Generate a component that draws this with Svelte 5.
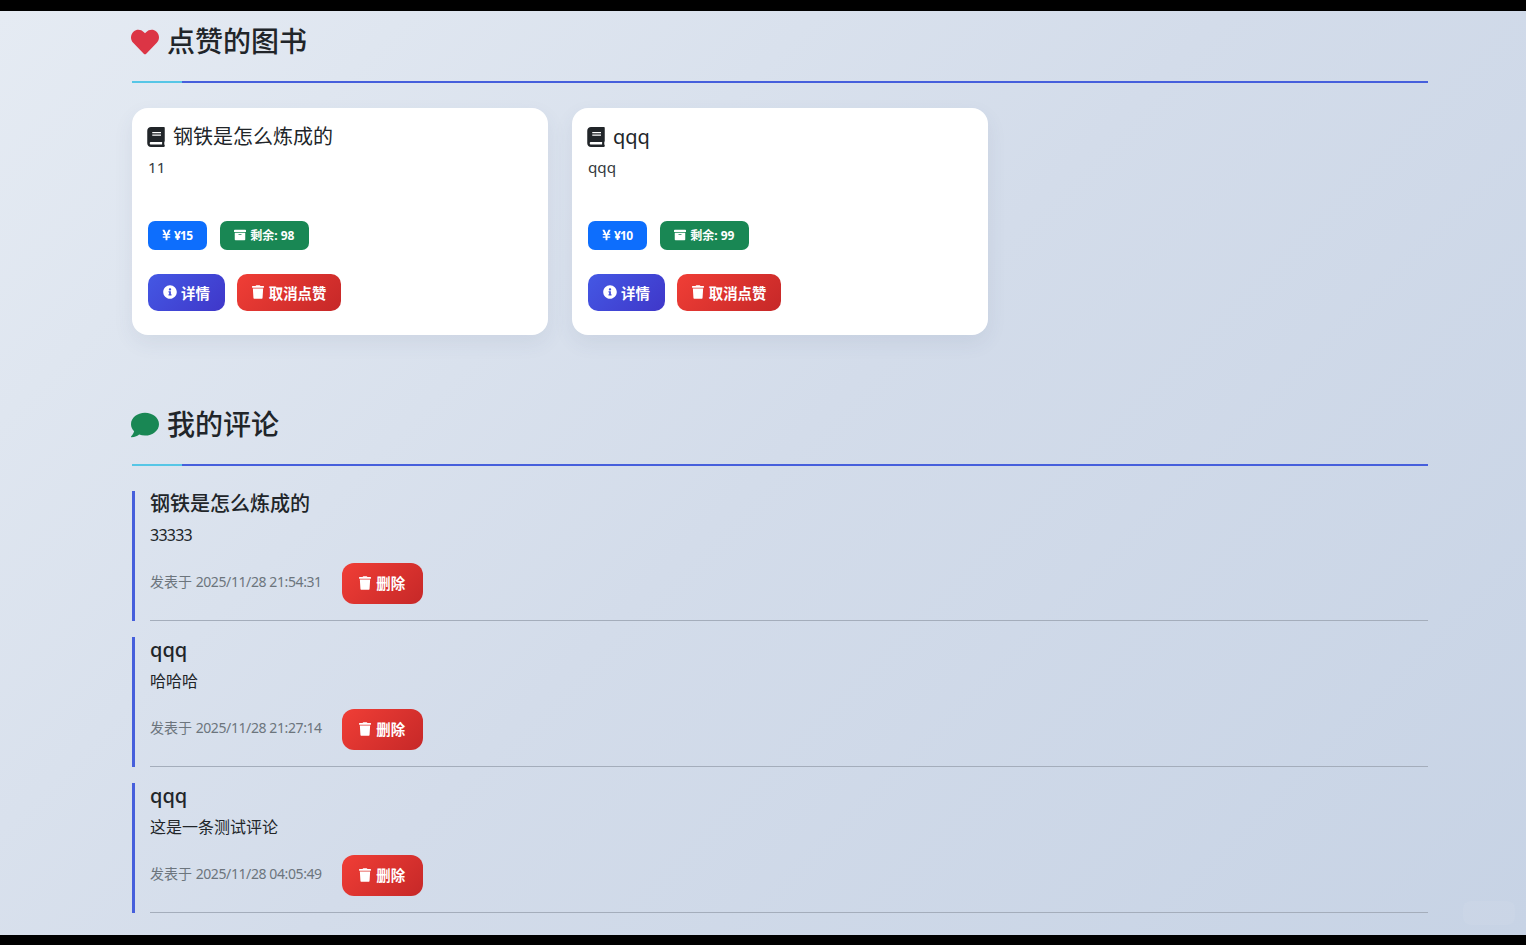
<script>
  const icons = {
    heart: { box: "0 0 512 512", d: "M462.3 62.6C407.5 15.9 326 24.3 275.7 76.2L256 96.5l-19.7-20.3C186.1 24.3 104.5 15.9 49.7 62.6c-62.8 53.6-66.1 149.8-9.9 207.9l193.5 199.8c12.5 12.9 32.8 12.9 45.3 0l193.5-199.8c56.3-58.1 53-154.3-9.8-207.9z" },
    comment: { box: "0 0 512 512", d: "M256 32C114.6 32 0 125.1 0 240c0 49.6 21.4 95 57 130.7C44.5 421.1 2.7 466 2.2 466.5c-2.2 2.3-2.8 5.7-1.5 8.7S4.8 480 8 480c66.3 0 116-31.8 140.6-51.4 32.7 12.3 69 19.4 107.4 19.4 141.4 0 256-93.1 256-208S397.4 32 256 32z" },
    book: { box: "0 0 448 512", d: "M448 360V24c0-13.3-10.7-24-24-24H96C43 0 0 43 0 96v320c0 53 43 96 96 96h328c13.3 0 24-10.7 24-24v-16c0-7.5-3.5-14.3-8.9-18.7-4.2-15.4-4.2-59.3 0-74.7 5.4-4.3 8.9-11.1 8.9-18.6zM128 134c0-3.3 2.7-6 6-6h212c3.3 0 6 2.7 6 6v20c0 3.3-2.7 6-6 6H134c-3.3 0-6-2.7-6-6v-20zm0 64c0-3.3 2.7-6 6-6h212c3.3 0 6 2.7 6 6v20c0 3.3-2.7 6-6 6H134c-3.3 0-6-2.7-6-6v-20zm253.4 250H96c-17.7 0-32-14.3-32-32 0-17.6 14.4-32 32-32h285.4c-1.9 17.1-1.9 46.9 0 64z" },
    yen: { box: "0 0 384 512", d: "M351.2 32h-65.3c-4.6 0-8.8 2.6-10.8 6.7l-55.4 113.2c-14.5 34.7-27.1 71.9-27.1 71.9h-1.3s-12.6-37.2-27.1-71.9L108.8 38.7c-2-4.1-6.2-6.7-10.8-6.7H32.8c-9.1 0-14.9 9.7-10.6 17.7L102.6 200H44c-6.6 0-12 5.4-12 12v32c0 6.6 5.4 12 12 12h88.2l19.8 37.2V320H44c-6.6 0-12 5.4-12 12v32c0 6.6 5.4 12 12 12h108v92c0 6.6 5.4 12 12 12h56c6.6 0 12-5.4 12-12v-92h108c6.6 0 12-5.4 12-12v-32c0-6.6-5.4-12-12-12H232v-26.8l19.8-37.2H340c6.6 0 12-5.4 12-12v-32c0-6.6-5.4-12-12-12h-58.6l80.4-150.3c4.3-8-1.5-17.7-10.6-17.7z" },
    archive: { box: "0 0 512 512", d: "M32 448c0 17.7 14.3 32 32 32h384c17.7 0 32-14.3 32-32V160H32v288zm160-212c0-6.6 5.4-12 12-12h104c6.6 0 12 5.4 12 12v8c0 6.6-5.4 12-12 12H204c-6.6 0-12-5.4-12-12v-8zM480 32H32C14.3 32 0 46.3 0 64v48c0 8.8 7.2 16 16 16h480c8.8 0 16-7.2 16-16V64c0-17.7-14.3-32-32-32z" },
    info: { box: "0 0 512 512", d: "M256 8C119 8 8 119.1 8 256c0 137 111 248 248 248s248-111 248-248C504 119.1 393 8 256 8zm0 110c23.2 0 42 18.8 42 42s-18.8 42-42 42-42-18.8-42-42 18.8-42 42-42zm56 254c0 6.6-5.4 12-12 12h-88c-6.6 0-12-5.4-12-12v-24c0-6.6 5.4-12 12-12h12v-64h-12c-6.6 0-12-5.4-12-12v-24c0-6.6 5.4-12 12-12h64c6.6 0 12 5.4 12 12v100h12c6.6 0 12 5.4 12 12v24z" },
    trash: { box: "0 0 448 512", d: "M432 32H312l-9.4-18.7A24 24 0 0 0 281.1 0H166.8a23.72 23.72 0 0 0-21.4 13.3L136 32H16A16 16 0 0 0 0 48v32a16 16 0 0 0 16 16h416a16 16 0 0 0 16-16V48a16 16 0 0 0-16-16zM53.2 467a48 48 0 0 0 47.9 45h245.8a48 48 0 0 0 47.9-45L416 128H32z" },
  };

  const books = [
    { title: "钢铁是怎么炼成的", desc: "11", price: "¥15", stock: 98 },
    { title: "qqq", desc: "qqq", price: "¥10", stock: 99 },
  ];

  const comments = [
    { book: "钢铁是怎么炼成的", text: "33333", digits: true, time: "2025/11/28 21:54:31" },
    { book: "qqq", text: "哈哈哈", time: "2025/11/28 21:27:14" },
    { book: "qqq", text: "这是一条测试评论", time: "2025/11/28 04:05:49" },
  ];
</script>

{#snippet icon(name, cls)}
  <svg class={cls} viewBox={icons[name].box} aria-hidden="true"><path fill="currentColor" d={icons[name].d} /></svg>
{/snippet}

<div class="screen">
  <main class="page">
    <section class="likes">
      <h2 class="section-title">
        {@render icon("heart", "title-icon heart")}
        <span>点赞的图书</span>
      </h2>
      <div class="cards">
        {#each books as book}
          <article class="card">
            <h3 class="card-title">
              {@render icon("book", "book")}
              <span>{book.title}</span>
            </h3>
            <p class="desc">{book.desc}</p>
            <div class="badges">
              <span class="badge blue">{@render icon("yen", "yen")}<span class="price">{book.price}</span></span>
              <span class="badge green">{@render icon("archive", "archive")}剩余: {book.stock}</span>
            </div>
            <div class="actions">
              <button class="btn indigo" type="button">{@render icon("info", "info")}详情</button>
              <button class="btn red" type="button">{@render icon("trash", "trash")}取消点赞</button>
            </div>
          </article>
        {/each}
      </div>
    </section>

    <section>
      <h2 class="section-title">
        {@render icon("comment", "title-icon chat")}
        <span>我的评论</span>
      </h2>
      <div class="comments">
        {#each comments as c}
          <article class="comment">
            <div class="comment-body">
              <h3 class="comment-book">{c.book}</h3>
              <p class="comment-text" class:digits={c.digits}>{c.text}</p>
              <div class="comment-meta">
                <small>发表于 <span class="time">{c.time}</span></small>
                <button class="btn red del" type="button">{@render icon("trash", "trash")}删除</button>
              </div>
            </div>
          </article>
        {/each}
      </div>
    </section>

    <div class="mark"></div>
  </main>
</div>

<style>
  :global(body) {
    background: #000;
    font-family: "Noto Sans", "Noto Sans CJK SC", sans-serif;
    color: #212529;
  }

  .screen {
    height: 945px;
    padding: 11px 0 10px;
    box-sizing: border-box;
    background: #000;
    overflow: hidden;
  }

  .page {
    position: relative;
    height: 924px;
    padding: 0 98px 0 132px;
    box-sizing: border-box;
    background: linear-gradient(135deg, #e5ebf3 0%, #d3dcea 50%, #c7d3e5 100%);
    overflow: hidden;
  }

  .likes {
    margin-bottom: 59px;
  }

  .section-title {
    position: relative;
    display: flex;
    align-items: center;
    gap: 8px;
    height: 72px;
    margin: 0 0 25px;
    box-sizing: border-box;
    padding-bottom: 8px;
    border-bottom: 2px solid #465fdc;
    font-size: 28px;
    font-weight: 500;
    line-height: 1.2;
  }

  .section-title::after {
    content: "";
    position: absolute;
    left: 0;
    bottom: -2px;
    width: 50px;
    height: 2px;
    background: #56c6e6;
  }

  .title-icon {
    width: 28px;
    height: 28px;
    margin-left: -1px;
  }

  .heart {
    color: #dc3545;
  }

  .chat {
    color: #198754;
  }

  .cards {
    display: flex;
    gap: 24px;
  }

  .card {
    width: 416px;
    height: 227px;
    padding: 16px;
    box-sizing: border-box;
    background: #fff;
    border-radius: 16px;
    box-shadow: 0 8px 20px rgba(60, 80, 120, 0.08);
  }

  .card-title {
    display: flex;
    align-items: center;
    gap: 8px;
    margin: 0;
    font-size: 20px;
    font-weight: 400;
    line-height: 26px;
  }

  .book {
    width: 18px;
    height: 20px;
    margin-left: -1px;
  }

  .desc {
    margin: 6px 0 0;
    height: 55px;
    font-size: 15.2px;
    line-height: 22px;
    color: #343a40;
  }

  .badges {
    display: flex;
    gap: 13px;
    margin-top: 10px;
  }

  .badge {
    display: inline-flex;
    align-items: center;
    height: 29px;
    padding: 0 15px 1px 14px;
    box-sizing: border-box;
    border-radius: 7px;
    color: #fff;
    font-size: 12px;
    font-weight: 700;
  }

  .blue {
    background: #0d6efd;
  }

  .green {
    background: #198754;
  }

  .price {
    letter-spacing: -0.8px;
  }

  .yen {
    width: 9px;
    height: 12px;
    margin-right: 3px;
  }

  .archive {
    width: 12px;
    height: 12px;
    margin-right: 4px;
  }

  .actions {
    display: flex;
    gap: 12px;
    margin-top: 24px;
  }

  .btn {
    display: inline-flex;
    align-items: center;
    justify-content: center;
    gap: 5px;
    height: 37px;
    padding: 0 15px 1px;
    box-sizing: border-box;
    border: 0;
    border-radius: 10px;
    color: #fff;
    font: inherit;
    font-size: 14.4px;
    font-weight: 600;
  }

  .indigo {
    gap: 4px;
    background: linear-gradient(135deg, #4458e4, #3f37c9);
  }

  .red {
    background: linear-gradient(135deg, #f03e36, #c62828);
  }

  .info {
    width: 14px;
    height: 14px;
  }

  .trash {
    width: 12px;
    height: 14px;
  }

  .comments {
    display: flex;
    flex-direction: column;
    gap: 16px;
  }

  .comment {
    height: 130px;
    border-left: 3px solid #465fdc;
    padding-left: 15px;
  }

  .comment-body {
    height: 130px;
    box-sizing: border-box;
    border-bottom: 1px solid #a4adbb;
  }

  .comment-book {
    margin: 0;
    font-size: 20px;
    font-weight: 500;
    line-height: 26px;
  }

  .comment-text {
    margin: 9px 0 0;
    font-size: 16px;
    line-height: 18px;
  }

  .comment-text.digits {
    letter-spacing: -0.75px;
  }

  .comment-meta {
    display: flex;
    align-items: center;
    gap: 20px;
    margin-top: 19px;
  }

  small {
    position: relative;
    top: -3px;
    font-size: 14px;
    color: #6c757d;
  }

  .time {
    letter-spacing: -0.4px;
  }

  .del {
    width: 81px;
    height: 41px;
    padding: 0 0 2px;
    border-radius: 12px;
  }

  .mark {
    position: absolute;
    right: 11px;
    bottom: 10px;
    width: 52px;
    height: 24px;
    border-radius: 8px;
    background: rgba(255, 255, 255, 0.06);
  }
</style>
